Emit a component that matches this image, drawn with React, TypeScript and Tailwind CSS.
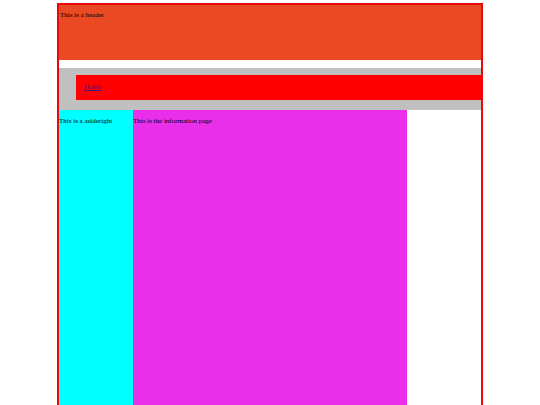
import React from 'react';

export default function App() {
  return (
    <div className="min-h-screen bg-white font-['Liberation_Serif',serif] text-[7px] leading-[9px] text-black">
      <div className="ml-[57px] mt-[3px] w-[426px] border-2 border-[#e80a0a] flex flex-col">
        {/* Header */}
        <header className="h-[55px] bg-[#ea4a23] pt-[6px] pl-[1px]">
          <p>This is a header</p>
        </header>

        {/* Nav */}
        <nav className="mt-[8px] bg-[#c0c0c0] pt-[7px] pb-[10px] pl-[17px]">
          <div className="h-[25px] bg-[#ff0000] flex items-center pl-[8px]">
            <a href="#" className="text-[#3b1a8b] underline">Home</a>
          </div>
        </nav>

        {/* Body */}
        <div className="flex min-h-[300px]">
          <aside className="w-[74px] bg-[#00ffff] pt-[7px]">
            <p>This is a asideright</p>
          </aside>
          <main className="w-[274px] bg-[#e92fea] pt-[7px]">
            <p>This is the information page</p>
          </main>
          <div className="flex-1 bg-white" />
        </div>
      </div>
    </div>
  );
}
